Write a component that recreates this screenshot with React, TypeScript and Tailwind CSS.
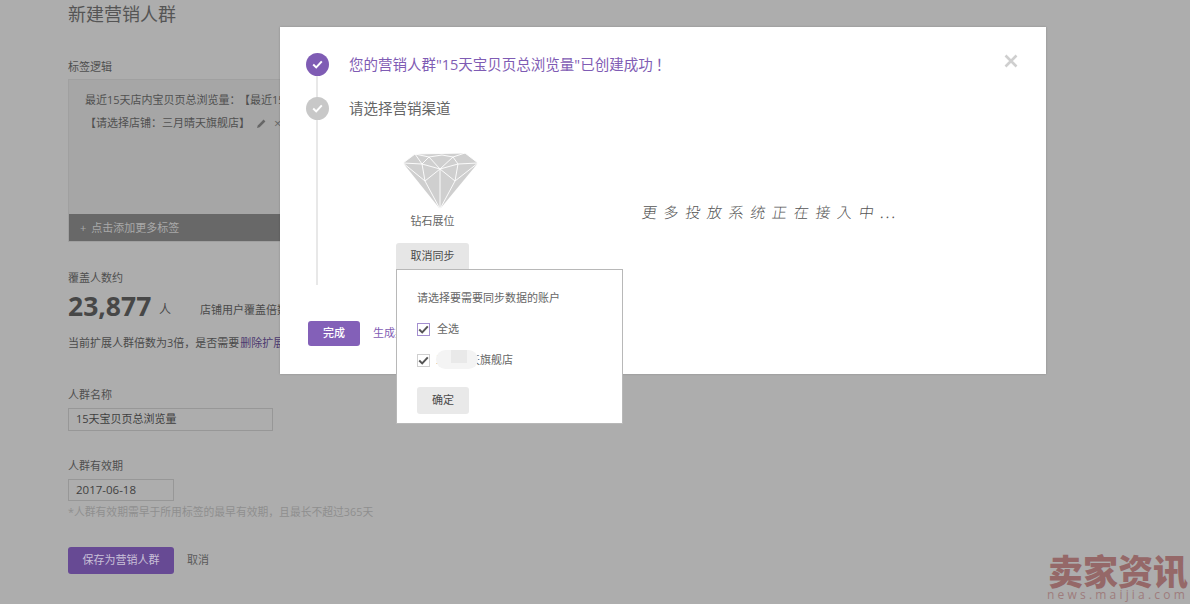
import React from "react";

function Tick({ color = "#fff" }: { color?: string }) {
  return (
    <svg width="11" height="9" viewBox="0 0 11 9" fill="none">
      <path d="M1.2 4.6 L4.2 7.4 L9.8 1.4" stroke={color} strokeWidth="2" />
    </svg>
  );
}

function Diamond() {
  const lines = [
    "M1 10 L13 1 L63 0 L76 10",
    "M1 10 L20 11 L27 4 M13 1 L20 11 L38 16 L27 4 L13 1",
    "M27 4 L40 2 L51 4 L38 16 L56 11 L51 4 L63 0 M56 11 L76 10",
    "M1 10 L23 28 L38 16 L53 28 L76 10 M20 11 L23 28 M56 11 L53 28",
    "M38 16 L38 56 M23 28 L38 56 L53 28",
  ];
  return (
    <svg width="77" height="57" viewBox="0 0 77 57" className="block">
      <polygon points="1,10 13,1 63,0 76,10 38,56" fill="#cfcfcf" />
      {lines.map((d) => (
        <path key={d} d={d} fill="none" stroke="#fff" strokeWidth="0.9" />
      ))}
    </svg>
  );
}

function Check({ active }: { active?: boolean }) {
  return (
    <span
      className={`flex h-[13px] w-[13px] items-center justify-center border bg-white ${
        active ? "border-[#a48fd0]" : "border-[#cfcfcf]"
      }`}
    >
      <Tick color="#555" />
    </span>
  );
}

export default function App() {
  return (
    <div
      className="relative h-[604px] w-[1190px] overflow-hidden bg-[#adadad] text-[11px] text-[#4a4a4a]"
      style={{ fontFamily: '"Open Sans","Noto Sans CJK SC",sans-serif' }}
    >
      {/* page behind the dialog */}
      <div className="flex flex-col pl-[68px]">
        <h1 className="mt-[2px] text-[18px] font-normal leading-[24px] text-[#555]">新建营销人群</h1>
        <div className="mt-[33px] leading-[16px] text-[#4f4f4f]">标签逻辑</div>
        <div className="mt-[4px] flex h-[163px] w-[560px] flex-col border border-[#a0a0a0] bg-[#a6a6a6]">
          <div className="flex-1 pl-[16px] pt-[11px] text-[#505050]">
            <div className="leading-[18px]">
              最近15天店内宝贝页总浏览量：<span className="ml-[4px]">【最近15天】</span>
            </div>
            <div className="mt-[5px] flex items-center leading-[18px]">
              <span>【请选择店铺：三月晴天旗舰店】</span>
              <svg width="11" height="11" viewBox="0 0 11 11" className="ml-[6px]">
                <path d="M1 10 L1.8 7.4 L7.6 1.6 L9.4 3.4 L3.6 9.2 Z" fill="#666" />
              </svg>
              <span className="ml-[7px] text-[13px] leading-none text-[#666]">×</span>
            </div>
          </div>
          <div className="flex h-[27px] items-center bg-[#686868] pl-[11px] pt-[1px] text-[#a8a8a8]">
            <span className="mr-[5px]">+</span>点击添加更多标签
          </div>
        </div>

        <div className="mt-[28px] leading-[16px] text-[#4f4f4f]">覆盖人数约</div>
        <div className="mt-[5px] flex h-[30px] items-center">
          <span className="w-[91px] text-[26.5px] font-bold leading-[30px] text-[#474747]">23,877</span>
          <span className="w-[41px] pt-[8px] text-[12px]">人</span>
          <span className="pt-[8px] text-[11px]">店铺用户覆盖倍数</span>
        </div>
        <div className="mt-[13px] leading-[18px]">
          当前扩展人群倍数为3倍，是否需要<span className="ml-[1px] text-[#4c3a70]">删除扩展人群</span>
        </div>

        <div className="mt-[35px] leading-[16px] text-[#4f4f4f]">人群名称</div>
        <div className="mt-[5px] flex h-[23px] w-[205px] items-center border border-[#979797] pl-[7px] text-[#3f3f3f]">
          15天宝贝页总浏览量
        </div>
        <div className="mt-[27px] leading-[16px] text-[#4f4f4f]">人群有效期</div>
        <div className="mt-[5px] flex h-[22px] w-[106px] items-center border border-[#979797] pl-[7px] text-[11.5px] text-[#3f3f3f]">
          2017-06-18
        </div>
        <div className="mt-[3px] text-[10.8px] leading-[16px] text-[#8f8f8f]">
          *人群有效期需早于所用标签的最早有效期，且最长不超过365天
        </div>
        <div className="mt-[27px] flex items-center">
          <button className="h-[27px] w-[106px] rounded-[3px] bg-[#674a94] text-[11px] text-[#c9c0d8]">保存为营销人群</button>
          <span className="ml-[13px] text-[#5a5a5a]">取消</span>
        </div>
      </div>

      {/* dialog */}
      <div className="absolute left-[280px] top-[27px] h-[347px] w-[766px] bg-white pl-[26px] pt-[26px] shadow-[0_0_2px_rgba(0,0,0,0.2)]">
        <svg width="14" height="14" viewBox="0 0 14 14" className="absolute right-[28px] top-[27px]">
          <path d="M1.5 1.5 L12.5 12.5 M12.5 1.5 L1.5 12.5" stroke="#cfcfcf" strokeWidth="2.6" />
        </svg>
        <div className="relative">
          <div className="absolute left-[10px] top-[20px] h-[212px] w-[2px] bg-[#e8e8e8]" />
          <div className="relative flex h-[23px] items-center">
            <span className="flex h-[23px] w-[23px] items-center justify-center rounded-full bg-[#7f5cb4]">
              <Tick />
            </span>
            <span className="ml-[20px] text-[14.5px] text-[#7f5cb4]">
              您的营销人群"15天宝贝页总浏览量"已创建成功<span className="ml-[3px]">！</span>
            </span>
          </div>
          <div className="relative mt-[21px] flex h-[23px] items-center">
            <span className="flex h-[23px] w-[23px] items-center justify-center rounded-full bg-[#c8c8c8]">
              <Tick />
            </span>
            <span className="ml-[20px] text-[14.5px] text-[#666]">请选择营销渠道</span>
          </div>
          <div className="relative ml-[90px] mt-[33px] flex">
            <div className="flex w-[73px] flex-col items-center">
              <div className="w-[79px] shrink-0 pl-[9px]">
                <Diamond />
              </div>
              <div className="mt-[2px] w-full text-center leading-[18px] text-[#666]">钻石展位</div>
              <button className="mt-[13px] h-[27px] w-[73px] rounded-t-[3px] bg-[#e6e6e6] text-[11px] text-[#4a4a4a]">取消同步</button>
            </div>
            <div
              className="ml-[173px] mt-[47px] h-[24px] skew-x-[-8deg] text-[15px] font-light leading-[24px] tracking-[6.7px] text-[#555]"
              style={{ fontFamily: '"Noto Sans CJK JP",sans-serif' }}
            >
              更多投放系统正在接入中<span className="tracking-[2px]">...</span>
            </div>
          </div>
          <div className="ml-[2px] mt-[51px] flex items-center">
            <button className="h-[25px] w-[52px] rounded-[3px] bg-[#8360b8] text-[11px] font-medium text-white">完成</button>
            <span className="ml-[13px] text-[#7f5cb4]">生成渠道报告</span>
          </div>
        </div>
      </div>

      {/* popover */}
      <div className="absolute left-[396px] top-[269px] flex h-[155px] w-[227px] flex-col border border-[#b8b8b8] bg-white pl-[20px] pt-[20px] text-[#666]">
        <div className="leading-[16px]">请选择要需要同步数据的账户</div>
        <div className="mt-[15px] flex h-[16px] items-center">
          <Check active />
          <span className="ml-[7px]">全选</span>
        </div>
        <div className="mt-[15px] flex h-[16px] items-center">
          <Check />
          <span className="relative ml-[6px]">
            三月晴天旗舰店
            <span className="absolute left-0 top-[-2px] h-[19px] w-[42px] rounded-full bg-[#f4f4f4]">
              <span className="absolute left-[15px] top-0 h-[13px] w-[16px] bg-[#e9e9e9]" />
            </span>
          </span>
        </div>
        <button className="mt-[19px] h-[27px] w-[52px] rounded-[3px] bg-[#e9e9e9] text-[11px] text-[#4a4a4a]">确定</button>
      </div>

      {/* watermark */}
      <div className="absolute bottom-[1px] right-[2px] flex flex-col items-end">
        <div className="h-[30px] text-[35px] font-black leading-[30px] text-[#956868]">卖家资讯</div>
        <div className="h-[16px] text-[12px] leading-[16px] tracking-[3.2px] text-[#9e7c7c]">news.maijia.com</div>
      </div>
    </div>
  );
}
